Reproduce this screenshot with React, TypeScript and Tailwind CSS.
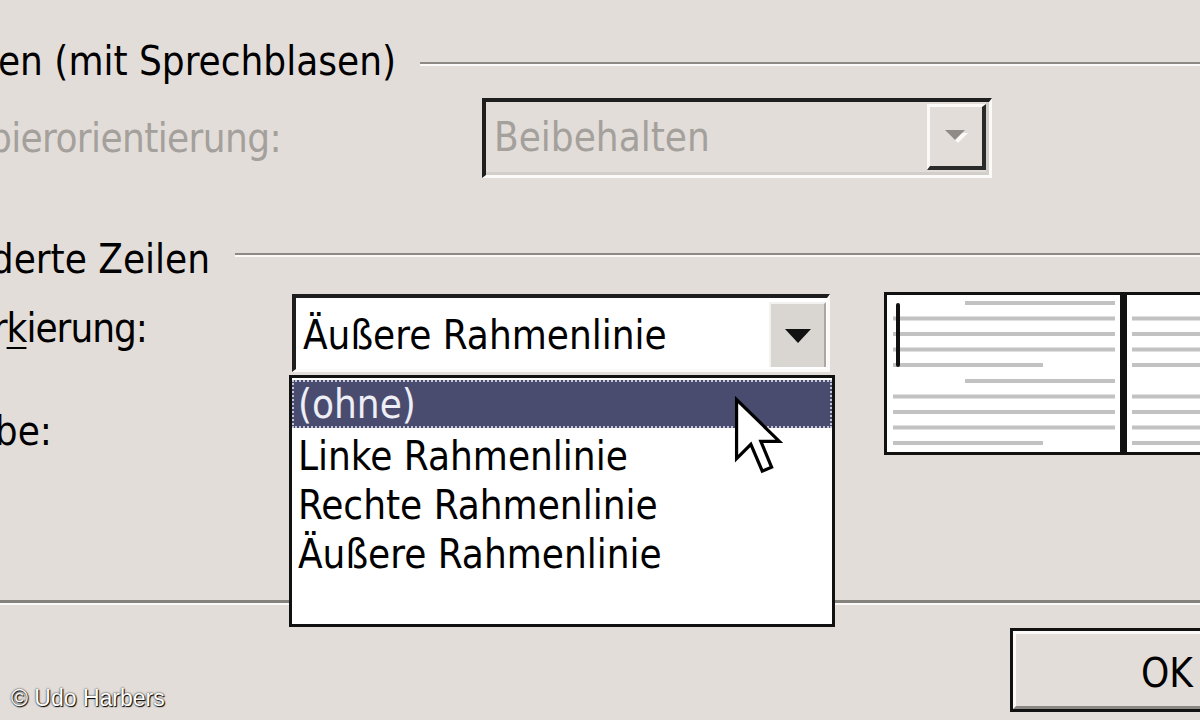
import React from "react";

const lineYs = [6, 21.5, 37, 52.5, 68, 84, 99.5, 115, 130.5, 146];
const leftSpans: [number, number][] = [
  [78, 228], [6, 228], [6, 228], [6, 228], [6, 156],
  [78, 228], [6, 228], [6, 228], [6, 228], [6, 156],
];
const rightSpans: [number, number][] = [
  [317, 480], [245, 480], [245, 480], [245, 480], [245, 395],
  [317, 480], [245, 480], [245, 480], [245, 480], [245, 395],
];

function Preview() {
  return (
    <svg width="474" height="157" viewBox="0 0 474 157" className="block">
      <rect x="0" y="0" width="474" height="157" fill="#ffffff" />
      {lineYs.map((y, i) => (
        <rect key={"l" + i} x={leftSpans[i][0]} y={y} width={leftSpans[i][1] - leftSpans[i][0]} height="4" fill="#c2c2c2" />
      ))}
      {lineYs.map((y, i) => (
        <rect key={"r" + i} x={rightSpans[i][0]} y={y} width={rightSpans[i][1] - rightSpans[i][0]} height="4" fill="#c2c2c2" />
      ))}
      <rect x="233" y="0" width="7" height="157" fill="#111111" />
      <rect x="9" y="8" width="4" height="64" rx="2" fill="#111111" />
    </svg>
  );
}

function HeaderLine({ className }: { className: string }) {
  return (
    <div
      className={
        "h-[4px] flex-1 border-t-2 border-b-2 border-t-[#8d8985] border-b-[#fbfaf9] " + className
      }
    />
  );
}

export default function App() {
  return (
    <div className="relative flex h-[720px] w-[1200px] flex-col overflow-hidden bg-[#e2ddd9] text-[40px] leading-[46px] text-black font-['DejaVu_Sans_Condensed','Liberation_Sans',sans-serif]">
      {/* Group 1 header */}
      <div className="mt-[38px] flex h-[46px] items-start">
        <div className="flex w-[396px] shrink-0 justify-end">
          <span className="whitespace-nowrap">Drucken (mit Sprechblasen)</span>
        </div>
        <HeaderLine className="ml-[24px] mt-[24px]" />
      </div>

      {/* Papierorientierung row */}
      <div className="mt-[14px] flex items-center">
        <div className="w-[482px] shrink-0">
          <div className="flex w-[281px] justify-end">
            <span className="whitespace-nowrap tracking-[-0.6px] text-[#a4a09c]">Papierorientierung:</span>
          </div>
        </div>
        <div className="h-[80px] w-[510px] shrink-0 border-t-4 border-l-4 border-r-[3px] border-b-[3px] border-t-[#1e1e1e] border-l-[#1e1e1e] border-r-[#fbfaf9] border-b-[#fbfaf9]">
          <div className="flex h-full border-r-[3px] border-b-[3px] border-r-[#d2cec9] border-b-[#d2cec9] py-[2px]">
            <div className="flex flex-1 items-center pl-[8px] text-[#a4a09c]">Beibehalten</div>
            <div className="flex w-[59px] items-center justify-center border-t-[3px] border-l-[3px] border-r-4 border-b-4 border-t-[#fbfaf9] border-l-[#fbfaf9] border-r-[#2a2a2a] border-b-[#2a2a2a] bg-[#e2ddd9]">
              <svg width="26" height="15" viewBox="0 0 26 15">
                <polygon points="5,4 25,4 15,14" fill="#fbfaf9" />
                <polygon points="2,1 22,1 12,11" fill="#8f8b87" />
              </svg>
            </div>
          </div>
        </div>
      </div>

      {/* Group 2 header */}
      <div className="mt-[58px] flex h-[46px] items-start">
        <div className="flex w-[210px] shrink-0 justify-end">
          <span className="whitespace-nowrap">Geänderte Zeilen</span>
        </div>
        <HeaderLine className="ml-[25px] mt-[17px]" />
      </div>

      {/* Markierung / Farbe rows */}
      <div className="mt-[12px] flex items-start">
        <div className="flex w-[292px] shrink-0 flex-col">
          <div className="mt-[11px] flex w-[147px] justify-end">
            <span className="whitespace-nowrap tracking-[-1px]">
              Mar<span className="underline decoration-2 underline-offset-[5px]">k</span>ierung:
            </span>
          </div>
          <div className="mt-[57px] flex w-[52px] justify-end">
            <span className="whitespace-nowrap">Farbe:</span>
          </div>
        </div>

        <div className="relative w-[538px] shrink-0">
          <div className="h-[78px] border-t-4 border-l-4 border-r-[3px] border-b-[3px] border-t-[#1e1e1e] border-l-[#1e1e1e] border-r-[#fbfaf9] border-b-[#fbfaf9]">
            <div className="flex h-full bg-white pt-[4px] pr-[1px] pb-[2px]">
              <div className="flex flex-1 items-center pl-[7px]">Äußere Rahmenlinie</div>
              <div className="flex w-[57px] items-center justify-center border-t-2 border-l-2 border-r-2 border-t-[#f4f2f0] border-l-[#f4f2f0] border-r-[#aaa6a2] bg-[#d9d5d1]">
                <svg width="26" height="14" viewBox="0 0 26 14">
                  <polygon points="0,0 26,0 13,14" fill="#111111" />
                </svg>
              </div>
            </div>
          </div>

          {/* open dropdown list */}
          <div className="absolute left-[-3px] top-[81px] z-10 h-[252px] w-[546px] border-[3px] border-[#111111] bg-white pt-[2px]">
            <div className="flex h-[48px] items-center border-2 border-dotted border-[#c3c4d8] bg-[#4a4c6f] pl-[4px] text-[#eeeef6]">
              (ohne)
            </div>
            <div className="h-[49px] pl-[6px] pt-[5px]">Linke Rahmenlinie</div>
            <div className="h-[49px] pl-[6px] pt-[5px]">Rechte Rahmenlinie</div>
            <div className="h-[49px] pl-[6px] pt-[5px]">Äußere Rahmenlinie</div>
          </div>
        </div>

        <div className="-mt-[2px] ml-[54px] h-[163px] w-[480px] shrink-0 border-[3px] border-[#111111] bg-white">
          <Preview />
        </div>
      </div>

      {/* bottom separator */}
      <div className="mt-[145px] h-[5px] w-full border-t-[3px] border-b-2 border-t-[#85817d] border-b-[#fbfaf9]" />

      {/* OK button */}
      <div className="mt-[23px] flex">
        <div className="ml-[1010px] h-[84px] w-[314px] shrink-0 border-[3px] border-[#111111]">
          <div className="flex h-full items-center justify-center border-[3px] border-t-[#fbfaf9] border-l-[#fbfaf9] border-r-[#8a8682] border-b-[#8a8682] bg-[#e2ddd9] pt-[6px]">
            OK
          </div>
        </div>
      </div>

      {/* mouse cursor */}
      <svg
        className="absolute left-[733px] top-[396px] z-20"
        width="50"
        height="84"
        viewBox="0 0 14 23.5"
      >
        <path
          d="M1 1 L1 17.5 L5 13.5 L8.2 21 L10.8 19.9 L7.8 12.7 L13 12.7 Z"
          fill="#ffffff"
          stroke="#000000"
          strokeWidth="0.9"
          strokeLinejoin="miter"
        />
      </svg>

      {/* watermark */}
      <div className="absolute left-[11px] top-[687px] text-[23px] leading-[23px] text-white font-['Liberation_Sans_Narrow','Liberation_Sans',sans-serif] [text-shadow:0_0_2px_#000,1px_1px_1px_#000]">
        © Udo Harbers
      </div>
    </div>
  );
}
